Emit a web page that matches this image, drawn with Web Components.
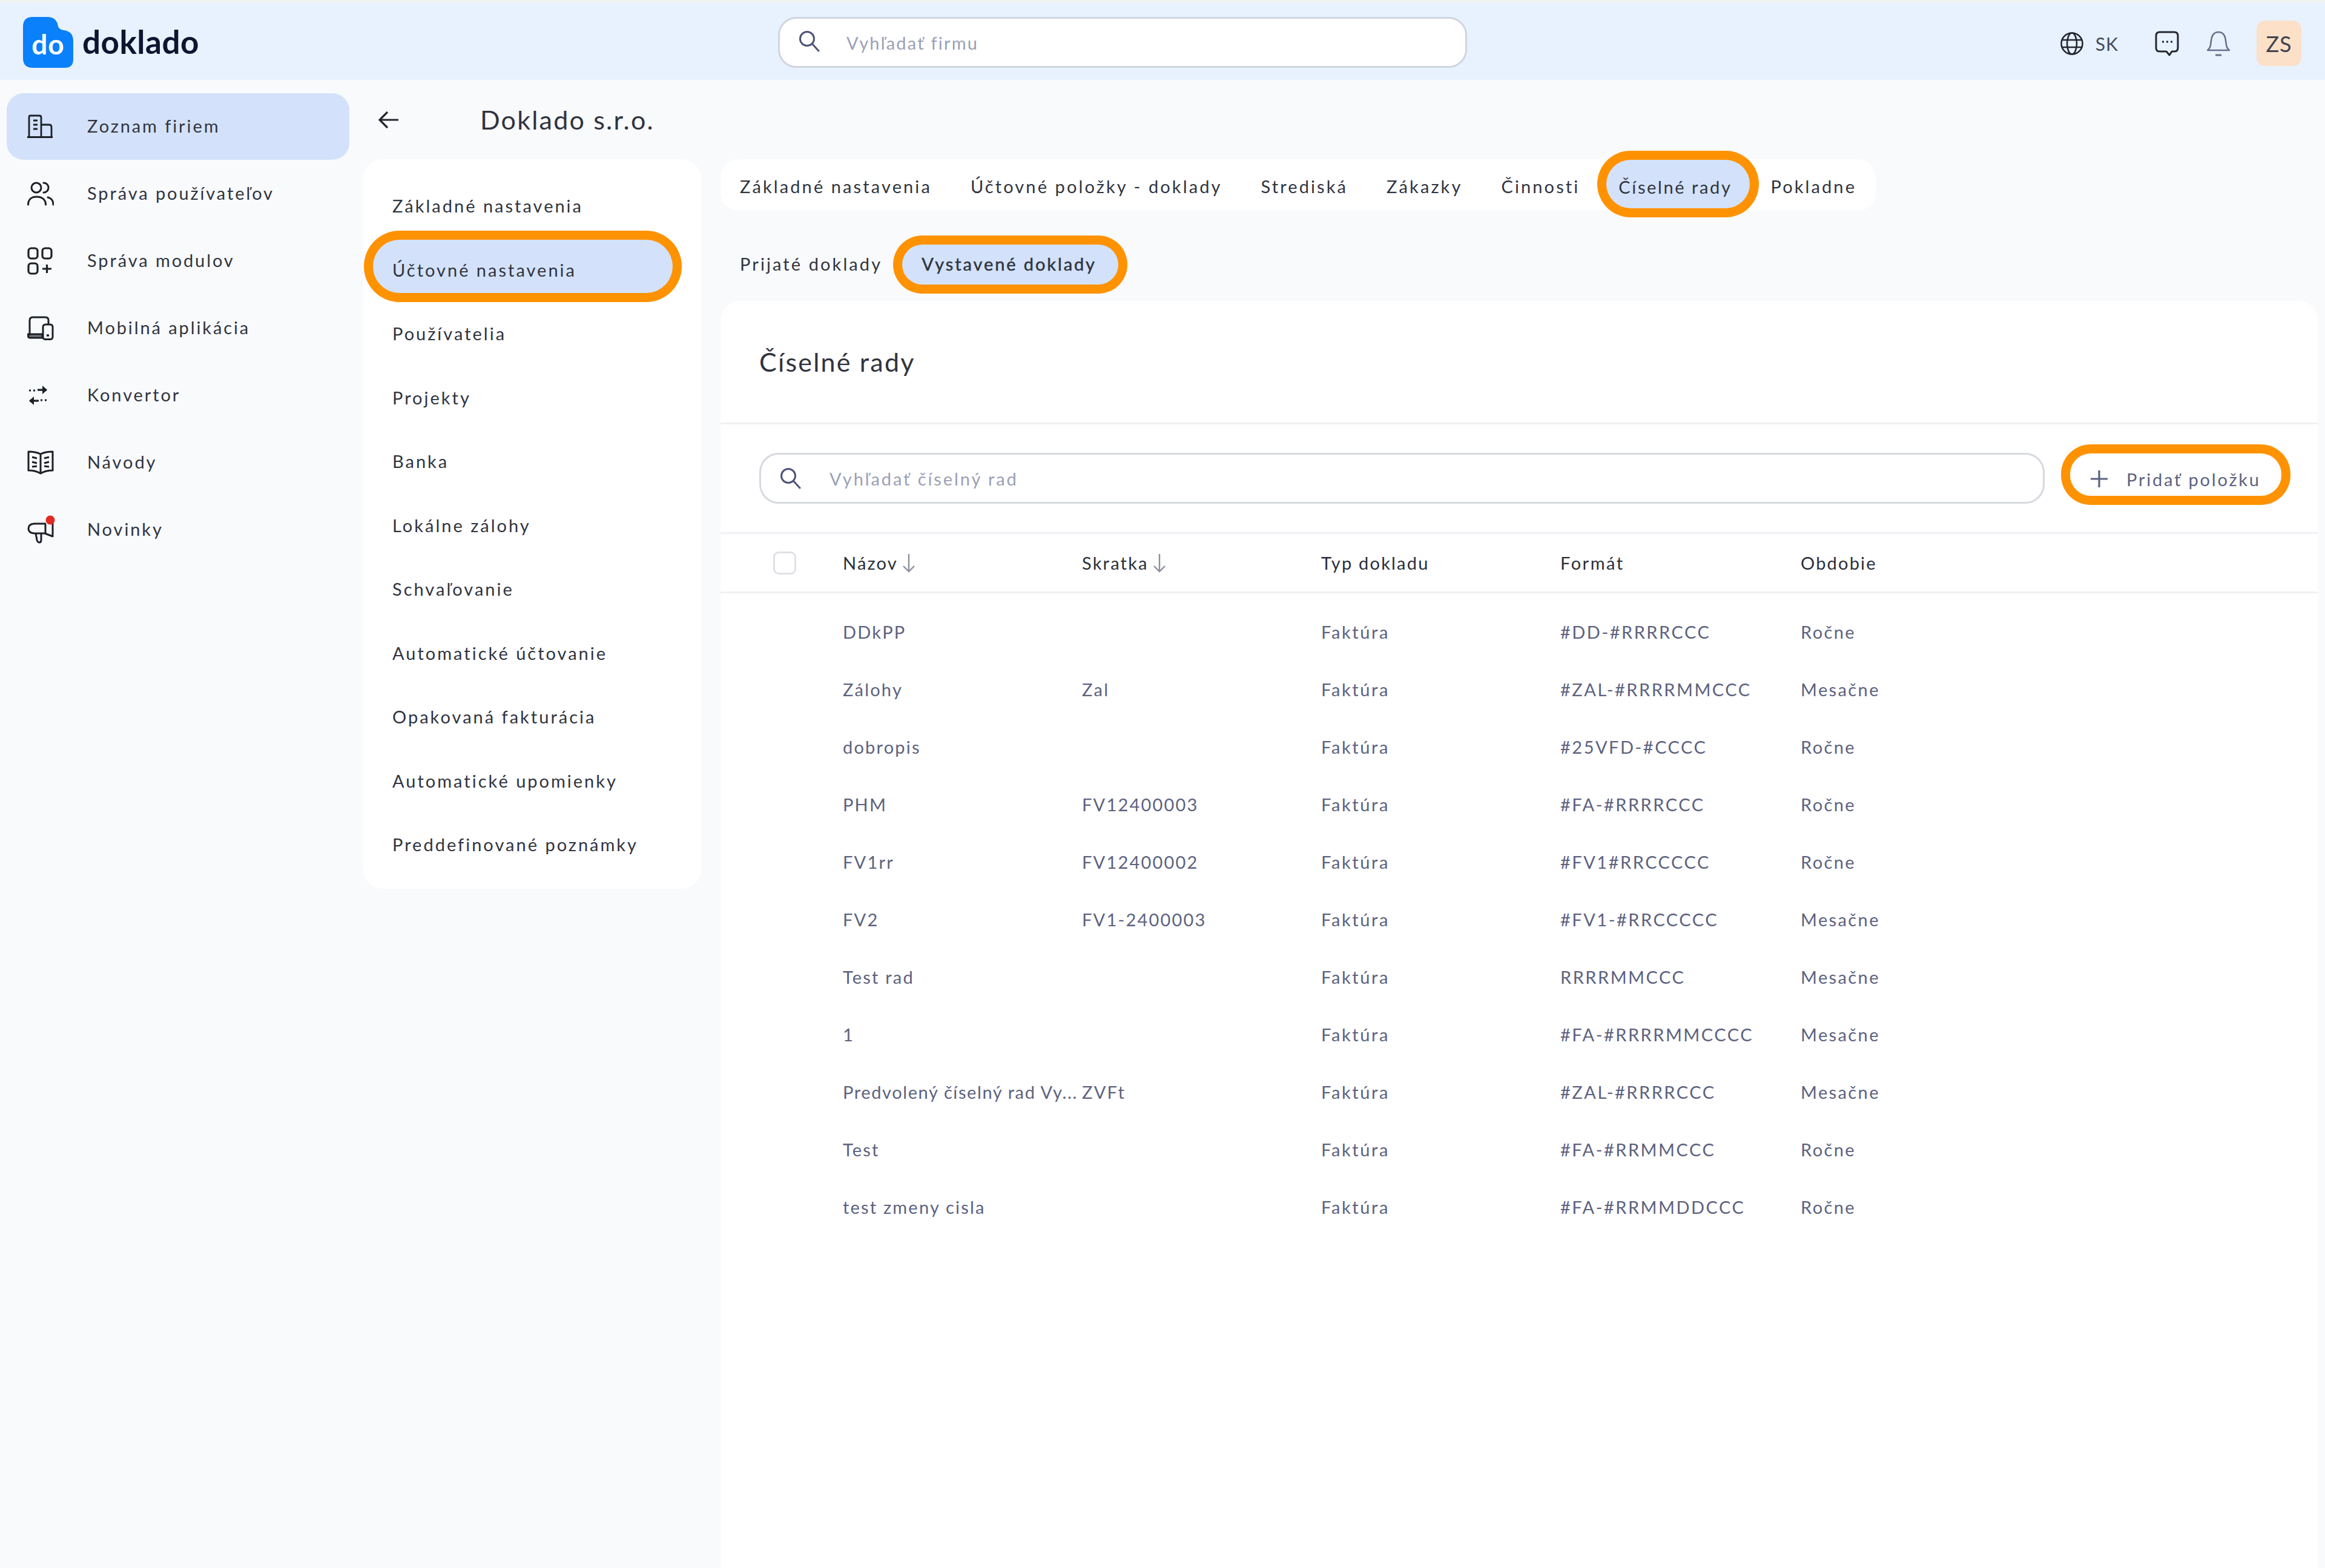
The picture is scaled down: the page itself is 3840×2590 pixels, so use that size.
<!DOCTYPE html>
<html lang="sk">
<head>
<meta charset="utf-8">
<title>Doklado</title>
<style>
  html, body { margin: 0; padding: 0; }
  body {
    width: 3840px;
    height: 2590px;
    overflow: hidden;
    font-family: "Lato", "Liberation Sans", sans-serif;
    --ink: #2a2f3a;
    --ink-soft: #5c6280;
    --ring: #ff9200;
    --fill: #d3e2fa;
  }
</style>
</head>
<body>
<dk-app>
  <dk-header slot="header"></dk-header>
  <dk-sidebar slot="sidebar">
    <dk-nav-item label="Zoznam firiem" icon="building" active></dk-nav-item>
    <dk-nav-item label="Správa používateľov" icon="users"></dk-nav-item>
    <dk-nav-item label="Správa modulov" icon="modules"></dk-nav-item>
    <dk-nav-item label="Mobilná aplikácia" icon="devices"></dk-nav-item>
    <dk-nav-item label="Konvertor" icon="convert"></dk-nav-item>
    <dk-nav-item label="Návody" icon="book"></dk-nav-item>
    <dk-nav-item label="Novinky" icon="megaphone"></dk-nav-item>
  </dk-sidebar>
  <dk-company slot="main"></dk-company>
</dk-app>

<script>
const ICONS = {
  building: `<svg width="42" height="40" viewBox="0 0 42 40" fill="none" stroke="#1c2027" stroke-width="2.8"><path d="M0 37.500h42"/><path d="M3 38V4q0-2 2-2h15q3 0 3 3v33"/><path d="M23 17h13q4 0 4 4v17"/><path d="M10 10h7M10 17h7M10 24h7" stroke-width="3.200"/></svg>`,
  users: `<svg width="44" height="40" viewBox="0 0 44 40" fill="none" stroke="#1c2027" stroke-width="3" stroke-linecap="round"><circle cx="15" cy="10" r="8"/><path d="M27 2c5 0 8 4 8 8s-3 8-8 8"/><path d="M1.500 38c0-9 6-13 14-13s15 4 15 13"/><path d="M34 26c5 1 9 5 9 12"/></svg>`,
  modules: `<svg width="42" height="46" viewBox="0 0 42 46" fill="none" stroke="#1c2027" stroke-width="3.200"><rect x="2" y="2" width="15" height="17" rx="4.500"/><rect x="25" y="2" width="15" height="17" rx="4.500"/><rect x="2" y="27" width="15" height="17" rx="4.500"/><path d="M25 36h15M32.500 29v14"/></svg>`,
  devices: `<svg width="44" height="40" viewBox="0 0 44 40" fill="none" stroke="#1c2027" stroke-width="3"><path d="M4 32V7q0-5 5-5h21q5 0 5 5v6"/><path d="M1.500 30H25v6H5q-3.500 0-3.500-3z" fill="#1c2027" fill-opacity=".6"/><rect x="26" y="14" width="16" height="24.500" rx="4" fill="#f9fafc"/><path d="M32 32h4" stroke-width="3.500"/></svg>`,
  convert: `<svg width="36" height="32" viewBox="0 0 36 32" fill="none" stroke="#1c2027"><path d="M17 7h15" stroke-width="3.200"/><path d="M25 0l8 7-8 7z" fill="#1c2027" stroke="none"/><path d="M19 25H4" stroke-width="3.200"/><path d="M11 18l-8 7 8 7z" fill="#1c2027" stroke="none"/><path d="M3 8h3M10 8h3M22 24h3M29 24h3" stroke-width="3"/></svg>`,
  book: `<svg width="44" height="40" viewBox="0 0 44 40" fill="none" stroke="#1c2027" stroke-width="3" stroke-linejoin="round"><path d="M22 6Q14 2 2 2v31q12 0 20 5q8-5 20-5V2Q30 2 22 6zM22 6v32"/><path d="M8 11l8 2M8 19l8 2M8 27l8-1M36 11l-8 2M36 19l-8 2M36 27l-8-1"/></svg>`,
  megaphone: `<svg width="46" height="48" viewBox="0 0 46 48" fill="none" stroke="#1c2027" stroke-width="3" stroke-linejoin="round"><path d="M31 14H11Q2 15 2 22t9 8h18l13 5V9"/><path d="M14 30l2 11q1 4 4 4t3-4v-11"/><path d="M30 15v15"/><circle cx="38" cy="8" r="7.500" fill="#e02a24" stroke="none"/></svg>`
};

function searchIcon() {
  return `<svg width="36" height="36" viewBox="0 0 36 36" fill="none" stroke="#4d5475" stroke-width="3" stroke-linecap="round"><circle cx="14" cy="14" r="11.500"/><path d="M22.500 22.500L33 34"/></svg>`;
}

class DkApp extends HTMLElement {
  connectedCallback() {
    this.attachShadow({ mode: "open" });
    this.shadowRoot.innerHTML = `
      <style>
        :host {
          display: grid;
          grid-template-columns: 600px 1fr;
          grid-template-rows: 132px 1fr;
          height: 2590px;
          background: #f9fafc;
          color: var(--ink);
        }
        .top { grid-column: 1 / 3; }
      </style>
      <div class="top"><slot name="header"></slot></div>
      <slot name="sidebar"></slot>
      <slot name="main"></slot>
    `;
  }
}

class DkHeader extends HTMLElement {
  connectedCallback() {
    this.attachShadow({ mode: "open" });
    this.shadowRoot.innerHTML = `
      <style>
        :host {
          display: flex;
          box-sizing: border-box;
          height: 132px;
          align-items: center;
          background: #e8f2fe;
          border-top: 5px solid #f0f1f3;
          padding: 0 39px 0 38px;
        }
        .logo { display: flex; align-items: center; width: 1247px; }
        .mark { display: grid; width: 83px; height: 84px; margin-top: 3px; }
        .mark > * { grid-area: 1 / 1; }
        .mark span {
          place-self: center;
          font: 700 46px "Lato", sans-serif;
          color: #fff;
          letter-spacing: 1px;
          margin-top: 4px;
        }
        .name {
          margin: 0 0 0 15px;
          font: 700 53px "Lato", sans-serif;
          color: #0d1630;
          letter-spacing: .5px;
        }
        .search {
          box-sizing: border-box;
          display: flex;
          align-items: center;
          width: 1138px;
          height: 84px;
          margin-top: 3px;
          background: #fff;
          border: 3px solid #d0d5df;
          border-radius: 30px;
          padding: 0 0 0 31px;
        }
        .search svg { margin-bottom: 4px; }
        .search span {
          margin-left: 43px;
          font-size: 29px;
          color: #9a9fb6;
          letter-spacing: 2.2px;
        }
        .tools { display: flex; align-items: center; margin: 6px 0 0 auto; }
        .sk { margin: 0 60px 0 20px; font-size: 30px; letter-spacing: 1px; color: #454b5c; }
        .bell { margin: 0 44px 0 46px; }
        .avatar {
          display: flex;
          align-items: center;
          justify-content: center;
          width: 74px;
          height: 75px;
          border-radius: 14px;
          background: #fde0c8;
          font-size: 36px;
          color: #40444f;
          letter-spacing: 1px;
        }
      </style>
      <div class="logo">
        <div class="mark">
          <svg width="83" height="84" viewBox="0 0 83 84"><path fill="#0a80fa" d="M16 0H40Q56 0 58 16Q60 21 68 22Q83 24 83 40V70Q83 84 69 84H16Q0 84 0 68V16Q0 0 16 0z"/></svg>
          <span>do</span>
        </div>
        <div class="name">doklado</div>
      </div>
      <div class="search">${searchIcon()}<span>Vyhľadať firmu</span></div>
      <div class="tools">
        <svg width="38" height="38" viewBox="0 0 38 38" fill="none" stroke="#23272f" stroke-width="2.6"><circle cx="19" cy="19" r="17.500"/><ellipse cx="19" cy="19" rx="8" ry="17.500"/><path d="M3 13h32M3 25h32"/></svg>
        <span class="sk">SK</span>
        <svg width="40" height="42" viewBox="0 0 40 42" fill="none" stroke="#23272f" stroke-width="3"><path d="M8 2h24q6 0 6 6v20q0 6-6 6h-4l-4 6-5-6H8q-6 0-6-6V8q0-6 6-6z" stroke-linejoin="round"/><path d="M12 18h3M19 18h3M26 18h3" stroke-width="3"/></svg>
        <svg class="bell" width="38" height="42" viewBox="0 0 38 42" fill="none" stroke="#66708a" stroke-width="2.600"><path d="M1 32h36c-5-4-5-8-6-16C30 7 26 2 19 2S8 7 7 16C6 24 6 28 1 32z" stroke-linejoin="round"/><path d="M14 40h10" stroke-width="3"/></svg>
        <div class="avatar">ZS</div>
      </div>
    `;
  }
}

class DkSidebar extends HTMLElement {
  connectedCallback() {
    this.attachShadow({ mode: "open" });
    this.shadowRoot.innerHTML = `
      <style>
        :host { display: flex; flex-direction: column; gap: 1px; padding: 22px 23px 0 11px; }
      </style>
      <slot></slot>
    `;
  }
}

class DkNavItem extends HTMLElement {
  connectedCallback() {
    this.attachShadow({ mode: "open" });
    this.shadowRoot.innerHTML = `
      <style>
        :host {
          display: flex;
          align-items: center;
          height: 110px;
          border-radius: 28px;
          padding-left: 34px;
          font-size: 29px;
          letter-spacing: 2.9px;
          color: #30343f;
        }
        :host([active]) { background: var(--fill); }
        .ic { width: 99px; display: flex; align-items: center; height: 50px; }
        span { margin-bottom: 3px; }
      </style>
      <div class="ic">${ICONS[this.getAttribute("icon")]}</div>
      <span>${this.getAttribute("label")}</span>
    `;
  }
}

class DkCompany extends HTMLElement {
  connectedCallback() {
    this.attachShadow({ mode: "open" });
    this.shadowRoot.innerHTML = `
      <style>
        :host { display: flex; flex-direction: column; min-width: 0; padding-right: 12px; }
        .head { display: flex; align-items: center; height: 131px; padding-top: 0; }
        .head svg { margin-left: 25px; }
        .head h1 {
          margin: 0 0 0 134px;
          font-size: 43px;
          font-weight: 400;
          letter-spacing: 2.2px;
          color: #30343f;
        }
        .cols { display: flex; gap: 32px; flex: 1; min-height: 0; }
        .right { flex: 1; min-width: 0; display: flex; flex-direction: column; }
      </style>
      <div class="head">
        <svg width="34" height="30" viewBox="0 0 34 30" fill="none" stroke="#23272f" stroke-width="3.200"><path d="M33 15H3M15 2L2 15l13 13"/></svg>
        <h1>Doklado s.r.o.</h1>
      </div>
      <div class="cols">
        <dk-settings-menu></dk-settings-menu>
        <div class="right">
          <dk-tabs></dk-tabs>
          <dk-subtabs></dk-subtabs>
          <dk-series-card></dk-series-card>
        </div>
      </div>
    `;
  }
}

class DkSettingsMenu extends HTMLElement {
  connectedCallback() {
    const items = ["Základné nastavenia", "Účtovné nastavenia", "Používatelia", "Projekty", "Banka", "Lokálne zálohy", "Schvaľovanie", "Automatické účtovanie", "Opakovaná fakturácia", "Automatické upomienky", "Preddefinované poznámky"];
    this.attachShadow({ mode: "open" });
    this.shadowRoot.innerHTML = `
      <style>
        :host {
          display: flex;
          flex-direction: column;
          gap: 17.5px;
          box-sizing: border-box;
          width: 558px;
          height: 1205px;
          padding: 27px 47px 0 16px;
          background: #fff;
          border-radius: 32px;
          font-size: 29px;
          letter-spacing: 3px;
          color: #30343f;
        }
        div {
          box-sizing: border-box;
          height: 88px;
          padding: 11px 0 0 32px;
          display: flex;
          align-items: center;
          white-space: nowrap;
        }
        .on { background: var(--fill); border-radius: 44px; box-shadow: 0 0 0 15px var(--ring); }
      </style>
      ${items.map((t, i) => `<div class="${i === 1 ? "on" : ""}">${t}</div>`).join("")}
    `;
  }
}

class DkTabs extends HTMLElement {
  connectedCallback() {
    const tabs = ["Základné nastavenia", "Účtovné položky - doklady", "Strediská", "Zákazky", "Činnosti", "Číselné rady", "Pokladne"];
    this.attachShadow({ mode: "open" });
    this.shadowRoot.innerHTML = `
      <style>
        :host {
          display: flex;
          align-self: flex-start;
          height: 85px;
          background: #fff;
          border-radius: 30px;
          font-size: 29px;
          letter-spacing: 3.1px;
          color: #30343f;
        }
        div {
          box-sizing: border-box;
          height: 80px;
          padding: 8px 32px 0;
          display: flex;
          align-items: center;
          white-space: nowrap;
        }
        .on {
          margin: 1px 2px 0 12px;
          padding: 8px 30px 0 20px;
          background: var(--fill);
          border-radius: 40px;
          box-shadow: 0 0 0 15px var(--ring);
          letter-spacing: 2.6px;
        }
      </style>
      ${tabs.map((t, i) => `<div class="${i === 5 ? "on" : ""}">${t}</div>`).join("")}
    `;
  }
}

class DkSubtabs extends HTMLElement {
  connectedCallback() {
    this.attachShadow({ mode: "open" });
    this.shadowRoot.innerHTML = `
      <style>
        :host {
          display: flex;
          height: 66px;
          margin: 56px 0 27px;
          font-size: 29px;
          letter-spacing: 3.1px;
          color: #30343f;
        }
        div { display: flex; align-items: center; padding: 0 33px 0 32px; white-space: nowrap; }
        span { margin-bottom: 3px; }
        .on {
          padding: 0 36px 0 32px;
          background: var(--fill);
          border-radius: 33px;
          box-shadow: 0 0 0 15px var(--ring);
          -webkit-text-stroke: .5px #30343f;
          letter-spacing: 2.9px;
        }
      </style>
      <div><span>Prijaté doklady</span></div>
      <div class="on"><span>Vystavené doklady</span></div>
    `;
  }
}

class DkSeriesCard extends HTMLElement {
  connectedCallback() {
    const rows = [
      ["DDkPP", "", "Faktúra", "#DD-#RRRRCCC", "Ročne"],
      ["Zálohy", "Zal", "Faktúra", "#ZAL-#RRRRMMCCC", "Mesačne"],
      ["dobropis", "", "Faktúra", "#25VFD-#CCCC", "Ročne"],
      ["PHM", "FV12400003", "Faktúra", "#FA-#RRRRCCC", "Ročne"],
      ["FV1rr", "FV12400002", "Faktúra", "#FV1#RRCCCCC", "Ročne"],
      ["FV2", "FV1-2400003", "Faktúra", "#FV1-#RRCCCCC", "Mesačne"],
      ["Test rad", "", "Faktúra", "RRRRMMCCC", "Mesačne"],
      ["1", "", "Faktúra", "#FA-#RRRRMMCCCC", "Mesačne"],
      ["Predvolený číselný rad Vy...", "ZVFt", "Faktúra", "#ZAL-#RRRRCCC", "Mesačne"],
      ["Test", "", "Faktúra", "#FA-#RRMMCCC", "Ročne"],
      ["test zmeny cisla", "", "Faktúra", "#FA-#RRMMDDCCC", "Ročne"]
    ];
    const arrow = `<svg width="20" height="32" viewBox="0 0 20 32" fill="none" stroke="#8b8f99" stroke-width="2.400"><path d="M10 1v29M1 21l9 9 9-9"/></svg>`;
    this.attachShadow({ mode: "open" });
    this.shadowRoot.innerHTML = `
      <style>
        :host {
          display: block;
          flex: 1;
          background: #fff;
          border-radius: 32px 32px 0 0;
          font-size: 29px;
          letter-spacing: 2.2px;
          overflow: hidden;
        }
        h2 {
          box-sizing: border-box;
          margin: 0;
          height: 204px;
          padding: 76px 0 0 64px;
          font-size: 43px;
          line-height: 50px;
          font-weight: 400;
          letter-spacing: 2.2px;
          color: #30343f;
          border-bottom: 3px solid #f0f1f4;
        }
        .tools {
          box-sizing: border-box;
          display: flex;
          align-items: center;
          height: 181px;
          padding: 0 0 0 64px;
          border-bottom: 3px solid #f0f1f4;
        }
        .search {
          box-sizing: border-box;
          display: flex;
          align-items: center;
          width: 2123px;
          height: 84px;
          border: 3px solid #d6d9df;
          border-radius: 32px;
          padding-left: 31px;
        }
        .search span { margin-left: 46px; color: #9a9fb6; letter-spacing: 2.9px; }
        .add {
          display: flex;
          align-items: center;
          box-sizing: border-box;
          width: 349px;
          height: 70px;
          margin: -2px 0 10px 42px;
          padding: 14px 0 0 33px;
          border-radius: 34px;
          box-shadow: 0 0 0 15px var(--ring);
          color: var(--ink-soft);
          letter-spacing: 2.8px;
          white-space: nowrap;
        }
        .add svg { margin-right: 30px; }
        .row {
          display: grid;
          grid-template-columns: 202px 395px 395px 395px 397px 1fr;
          align-items: center;
          height: 95px;
          color: var(--ink-soft);
        }
        .row > div { white-space: nowrap; overflow: hidden; }
        .row > div:nth-child(4) { letter-spacing: 2.6px; }
        .row > div:nth-child(5) { letter-spacing: 2.5px; }
        .row > div:nth-child(6) { letter-spacing: 2.4px; }
        .row > div.long { letter-spacing: 1.6px; }
        .head {
          height: 98px;
          color: var(--ink);
          border-bottom: 3px solid #f0f1f4;
          box-sizing: border-box;
          margin-bottom: 16px;
        }
        .head > div { display: flex; align-items: center; gap: 8px; }
        .head > div:nth-child(4), .head > div:nth-child(6) { letter-spacing: 2.2px; }
        .check {
          box-sizing: border-box;
          width: 38px;
          height: 38px;
          margin-left: 87px;
          border: 3px solid #dfe1e6;
          border-radius: 9px;
        }
      </style>
      <h2>Číselné rady</h2>
      <div class="tools">
        <div class="search">${searchIcon()}<span>Vyhľadať číselný rad</span></div>
        <div class="add">
          <svg width="30" height="30" viewBox="0 0 30 30" fill="none" stroke="#5c6280" stroke-width="3.200"><path d="M15 1v28M1 15h28"/></svg>
          Pridať položku
        </div>
      </div>
      <div class="row head">
        <div><span class="check"></span></div>
        <div>Názov ${arrow}</div>
        <div>Skratka ${arrow}</div>
        <div>Typ dokladu</div>
        <div>Formát</div>
        <div>Obdobie</div>
      </div>
      ${rows.map(r => `<div class="row"><div></div>${r.map(c => `<div class="${c.length > 20 ? "long" : ""}">${c}</div>`).join("")}</div>`).join("")}
    `;
  }
}

customElements.define("dk-app", DkApp);
customElements.define("dk-header", DkHeader);
customElements.define("dk-sidebar", DkSidebar);
customElements.define("dk-nav-item", DkNavItem);
customElements.define("dk-company", DkCompany);
customElements.define("dk-settings-menu", DkSettingsMenu);
customElements.define("dk-tabs", DkTabs);
customElements.define("dk-subtabs", DkSubtabs);
customElements.define("dk-series-card", DkSeriesCard);
</script>
</body>
</html>
